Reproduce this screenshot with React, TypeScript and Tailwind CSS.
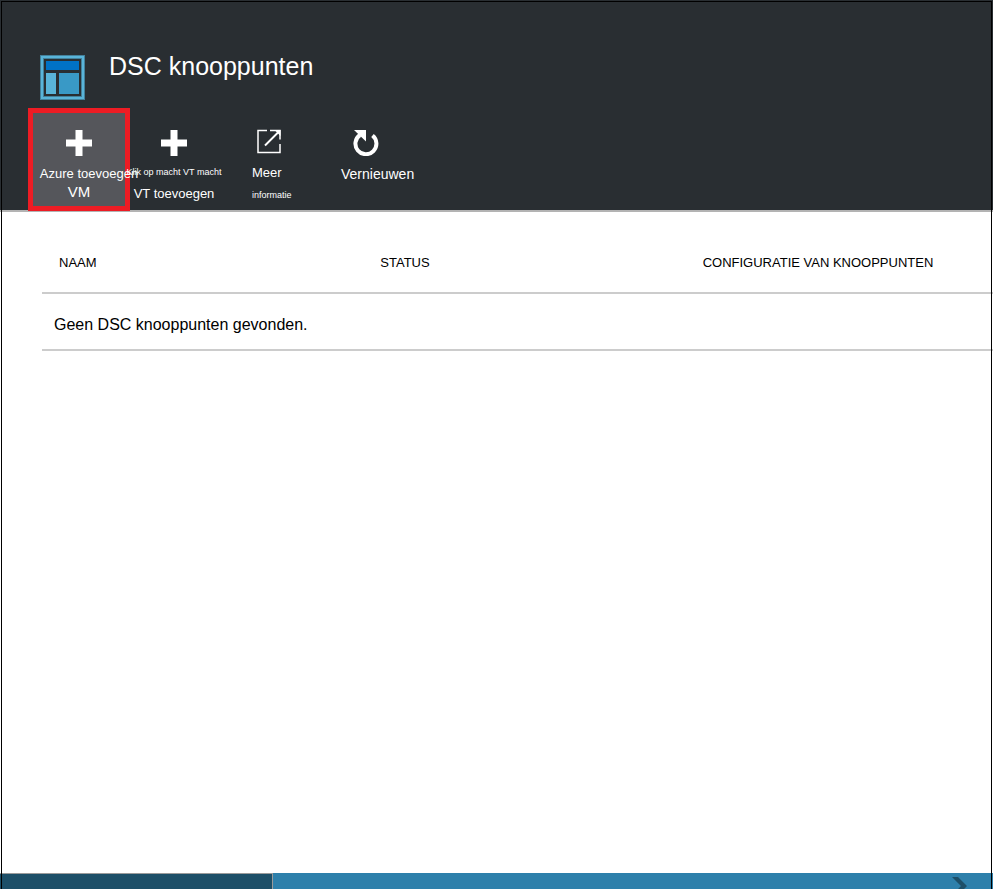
import type { ReactNode } from "react";

function PlusIcon() {
  return (
    <svg viewBox="0 0 26 26" className="h-[26px] w-[26px]" aria-hidden="true">
      <path d="M9.5 0h7v9.500h9.500v7h-9.500V26h-7v-9.500H0v-7h9.500z" fill="#fff" />
    </svg>
  );
}

function OpenIcon() {
  return (
    <svg viewBox="0 0 26 26" className="h-[26px] w-[26px]" fill="none" stroke="#fff" aria-hidden="true">
      <path d="M11 1.500H2v22h22V15" strokeWidth="1.500" />
      <path d="M9 16.500L23 2.500" strokeWidth="2" />
      <path d="M14 1.500h10v9" strokeWidth="1.500" />
      <path d="M18.500 1h6v6z" fill="#fff" stroke="none" />
    </svg>
  );
}

function RefreshIcon() {
  return (
    <svg viewBox="0 0 26 26" className="h-[26px] w-[26px]" aria-hidden="true">
      <path d="M19.500 5.500A10.500 10.500 0 1 1 7 5" fill="none" stroke="#fff" strokeWidth="4" />
      <path d="M1 0h12v11.500z" fill="#fff" />
    </svg>
  );
}

function NodesIcon() {
  return (
    <svg viewBox="0 0 45 45" className="h-[45px] w-[45px] shrink-0" aria-hidden="true">
      <rect x="0.5" y="0.5" width="44" height="44" fill="none" stroke="#43809a" />
      <rect x="2" y="2" width="41" height="41" fill="none" stroke="#59b4d9" strokeWidth="2" />
      <rect x="3.5" y="3.5" width="38" height="38" fill="none" stroke="#43809a" />
      <rect x="6" y="6" width="33" height="9" fill="#0072c6" />
      <rect x="6" y="18" width="10" height="21" fill="#59b4d9" />
      <rect x="19" y="18" width="20" height="21" fill="#3999c6" />
    </svg>
  );
}

function Command({ className, children }: { className: string; children: ReactNode }) {
  return (
    <button type="button" className={`flex h-[103px] shrink-0 flex-col whitespace-nowrap text-white ${className}`}>
      {children}
    </button>
  );
}

export default function App() {
  return (
    <div className="relative flex min-h-screen flex-col overflow-hidden bg-white font-['Liberation_Sans',Arial,sans-serif] text-black">
      <header className="border-b-2 border-[#b3b3b3] bg-[#292e32]">
        <div className="flex gap-6 pt-[55px] pl-10">
          <NodesIcon />
          <h1 className="-mt-px text-[25px] leading-6 text-white">DSC knooppunten</h1>
        </div>
        <nav aria-label="Opdrachten" className="mt-2 flex h-[102px] pl-7 [&_svg]:shrink-0">
          <Command className="w-[102px] items-center border-[5px] border-[#ed1c24] bg-[#55565b] pt-[17px]">
            <PlusIcon />
            <span className="ml-5 mt-[9px] text-[13px] leading-[18px]">Azure toevoegen</span>
            <span className="text-[15px] leading-[18px]">VM</span>
          </Command>
          <Command className="w-[88px] items-center pt-[22px]">
            <PlusIcon />
            <span className="mt-[7px] text-[9px] leading-[18px]">Klik op macht VT macht</span>
            <span className="mt-1 text-[13px] leading-[18px]">VT toevoegen</span>
          </Command>
          <Command className="ml-[34px] w-[60px] items-start pt-[21px]">
            <span className="ml-1">
              <OpenIcon />
            </span>
            <span className="mt-[9px] text-[13px] leading-[18px]">Meer</span>
            <span className="mt-1 text-[9px] leading-[18px]">informatie</span>
          </Command>
          <Command className="ml-[29px] w-[80px] items-start pt-[22px]">
            <span className="ml-3">
              <RefreshIcon />
            </span>
            <span className="mt-[9px] text-[14px] leading-[18px]">Vernieuwen</span>
          </Command>
        </nav>
      </header>

      <main className="flex-1 pl-[42px]">
        <table className="w-full table-fixed border-collapse text-left">
          <thead>
            <tr className="h-[81px] border-b-2 border-[#cccccc] text-[13px] leading-[18px]">
              <th scope="col" className="w-[34%] pt-[22px] pb-0 pl-[17px] font-normal">NAAM</th>
              <th scope="col" className="w-[34%] pt-[22px] pb-0 pl-[15px] font-normal">STATUS</th>
              <th scope="col" className="w-[32%] pt-[22px] pb-0 pl-[14px] font-normal whitespace-nowrap">
                CONFIGURATIE VAN KNOOPPUNTEN
              </th>
            </tr>
          </thead>
          <tbody>
            <tr className="h-[57px] border-b-2 border-[#cccccc]">
              <td colSpan={3} className="pt-1.5 pl-3 text-[16px]">
                Geen DSC knooppunten gevonden.
              </td>
            </tr>
          </tbody>
        </table>
      </main>

      <footer className="flex h-4 bg-[#2e80ab]">
        <div className="w-[273px] border-t border-r border-[#9b9b9b] bg-[#1d4f68]" />
        <div className="flex flex-1 justify-end overflow-hidden pt-1 pr-[25px]">
          <svg viewBox="0 0 16 22" className="h-[22px] w-4 shrink-0" aria-hidden="true">
            <path d="M0 0h6l9 9-9 9H0l9-9z" fill="#1d4f68" />
          </svg>
        </div>
      </footer>

      <div className="pointer-events-none absolute inset-x-px top-px bottom-0 border-x border-t border-black" />
    </div>
  );
}
